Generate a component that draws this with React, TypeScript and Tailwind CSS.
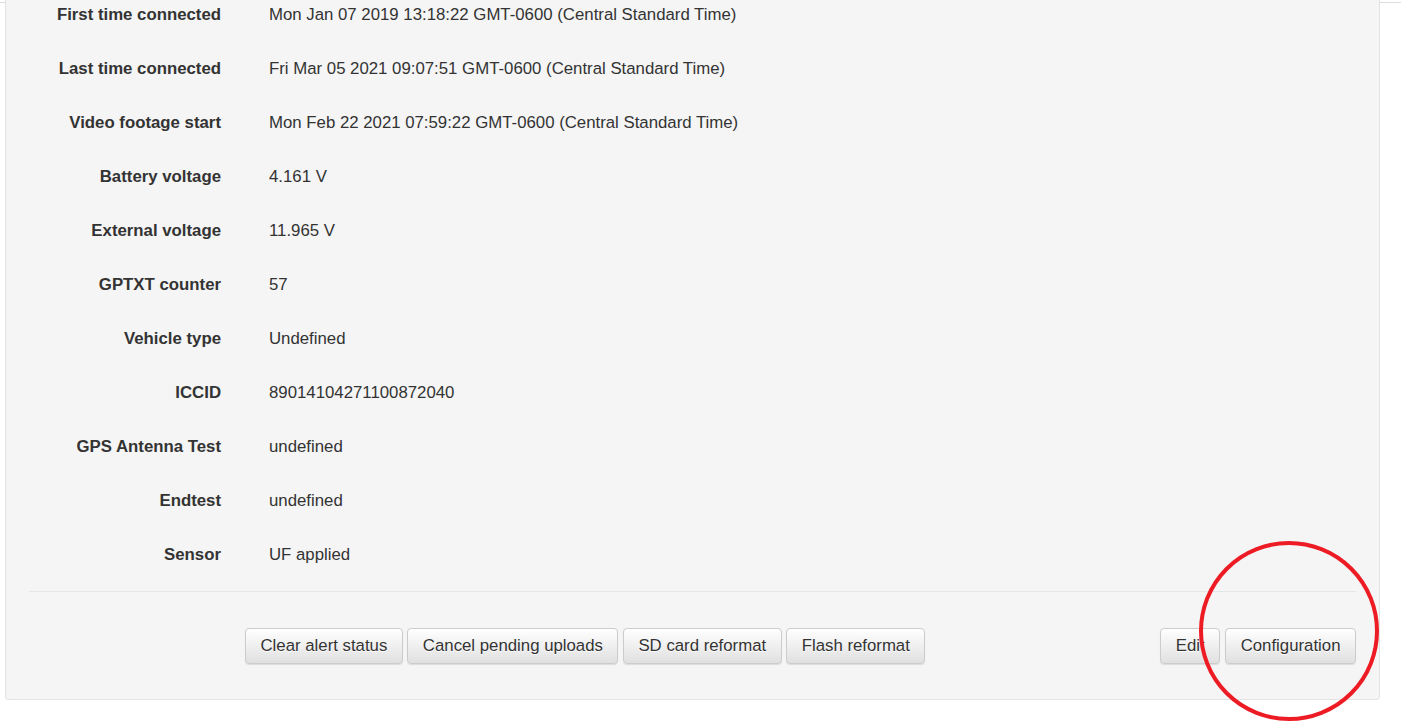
import React from "react";

const rows: [string, string][] = [
  ["First time connected", "Mon Jan 07 2019 13:18:22 GMT-0600 (Central Standard Time)"],
  ["Last time connected", "Fri Mar 05 2021 09:07:51 GMT-0600 (Central Standard Time)"],
  ["Video footage start", "Mon Feb 22 2021 07:59:22 GMT-0600 (Central Standard Time)"],
  ["Battery voltage", "4.161 V"],
  ["External voltage", "11.965 V"],
  ["GPTXT counter", "57"],
  ["Vehicle type", "Undefined"],
  ["ICCID", "89014104271100872040"],
  ["GPS Antenna Test", "undefined"],
  ["Endtest", "undefined"],
  ["Sensor", "UF applied"],
];

function Btn({ children }: { children: React.ReactNode }) {
  return (
    <button className="h-[36px] px-[14.5px] rounded-[4px] border border-[#cccccc] bg-gradient-to-b from-[#ffffff] to-[#e0e0e0] text-[16.8px] text-[#333333] shadow-[0_1px_1px_rgba(0,0,0,0.1)] [text-shadow:0_1px_0_#fff]">
      {children}
    </button>
  );
}

export default function App() {
  return (
    <div
      className="relative w-[1401px] h-[725px] overflow-hidden bg-white text-[#333333]"
      style={{ fontFamily: '"Liberation Sans", Arial, sans-serif' }}
    >
      <div className="h-[2px] bg-white" />
      <div className="h-px bg-[#dddddd]" />
      <div className="ml-[5px] w-[1375px] bg-[#f5f5f5] border border-t-0 border-[#e3e3e3] rounded-b-[4px] px-[23px] pb-[35px]">
        <div className="-mt-[15px]">
          {rows.map(([label, value]) => (
            <div key={label} className="flex items-center h-[54px] text-[16.8px]">
              <div className="w-[192px] text-right font-bold whitespace-nowrap">{label}</div>
              <div className="ml-[48px] whitespace-nowrap">{value}</div>
            </div>
          ))}
        </div>
        <div className="mt-[9px] h-px bg-[#e5e5e5]" />
        <div className="mt-[36px] flex items-center">
          <div className="ml-[216px] flex gap-[4.5px]">
            <Btn>Clear alert status</Btn>
            <Btn>Cancel pending uploads</Btn>
            <Btn>SD card reformat</Btn>
            <Btn>Flash reformat</Btn>
          </div>
          <div className="ml-auto flex gap-[5px]">
            <Btn>Edit</Btn>
            <Btn>Configuration</Btn>
          </div>
        </div>
      </div>
      <svg className="absolute left-[1199px] top-[541px]" width="182" height="182" viewBox="0 0 182 182">
        <circle cx="90" cy="90" r="88" fill="none" stroke="#ed1c24" strokeWidth="4" />
      </svg>
    </div>
  );
}
